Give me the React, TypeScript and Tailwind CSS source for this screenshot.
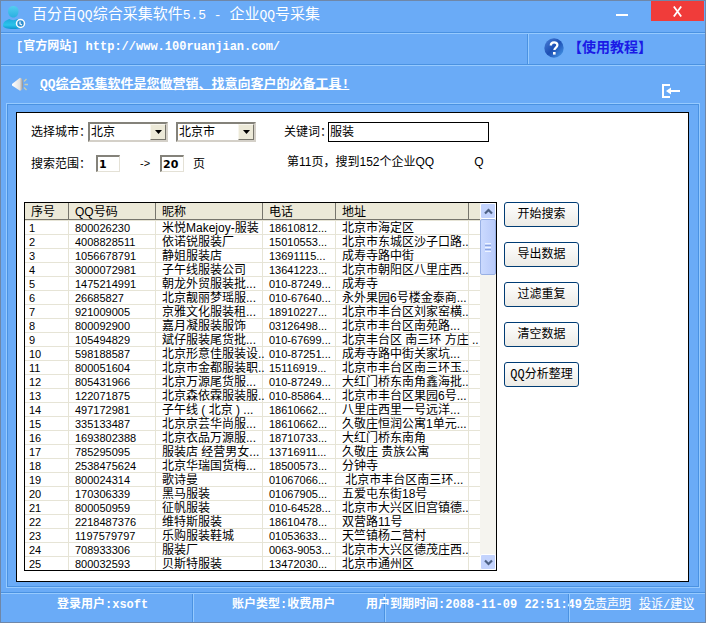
import { useState, type ReactNode } from "react";
import { clsx } from "clsx";

type Company = [qq: string, name: string, phone: string, address: string];

const companies: Company[] = [
  ["800026230", "米悦Makejoy-服装", "18610812...", "北京市海定区"],
  ["4008828511", "依诺锐服装厂", "15010553...", "北京市东城区沙子口路.."],
  ["1056678791", "静姐服装店", "13691115...", "成寿寺路中街"],
  ["3000072981", "子午线服装公司", "13641223...", "北京市朝阳区八里庄西.."],
  ["1475214991", "朝龙外贸服装批...", "010-87249...", "成寿寺"],
  ["26685827", "北京靓丽梦瑶服...", "010-67640...", "永外果园6号楼金泰商..."],
  ["921009005", "京雅文化服装租...", "18910227...", "北京市丰台区刘家窑横.."],
  ["800092900", "嘉月凝服装服饰", "03126498...", "北京市丰台区南苑路..."],
  ["105494829", "斌仔服装尾货批...", "010-67699...", "北京丰台区 南三环 方庄 .."],
  ["598188587", "北京形意佳服装设..", "010-87251...", "成寿寺路中街关家坑..."],
  ["800051604", "北京市金都服装职..", "15116919...", "北京市丰台区南三环玉.."],
  ["805431966", "北京万源尾货服...", "010-87249...", "大红门桥东南角鑫海批.."],
  ["122071875", "北京森依霖服装服..", "010-85864...", "北京市丰台区果园6号..."],
  ["497172981", "子午线 ( 北京 ) ...", "18610662...", "八里庄西里一号远洋..."],
  ["335133487", "北京京芸华尚服...", "18610662...", "久敬庄恒润公寓1单元..."],
  ["1693802388", "北京衣品万源服...", "18710733...", "大红门桥东南角"],
  ["785295095", "服装店 经营男女...", "13716911...", "久敬庄 贵族公寓"],
  ["2538475624", "北京华瑞国货梅...", "18500573...", "分钟寺"],
  ["800024314", "歌诗曼", "01067066...", " 北京市丰台区南三环..."],
  ["170306339", "黑马服装", "01067905...", "五爱屯东街18号"],
  ["800050959", "征帆服装", "010-64528...", "北京市大兴区旧宫镇德.."],
  ["2218487376", "维特斯服装", "18610478...", "双营路11号"],
  ["1197579797", "乐购服装鞋城", "01053633...", "天竺镇杨二营村"],
  ["708933306", "服装厂", "0063-9053...", "北京市大兴区德茂庄西.."],
  ["800032593", "贝斯特服装", "13472030...", "北京市通州区"],
];

const headers = ["序号", "QQ号码", "昵称", "电话", "地址", ""];
const actions = ["开始搜索", "导出数据", "过滤重复", "清空数据", "QQ分析整理"];

const mono = "font-['Liberation_Mono','Noto_Sans_CJK_SC',monospace]";

function Groove() {
  return (
    <div>
      <div className="h-px bg-[#4a92e2]" />
      <div className="h-px bg-[#96caff]" />
    </div>
  );
}

function Half({ children }: { children: ReactNode }) {
  return <span className={clsx("text-[13px] whitespace-pre", mono)}>{children}</span>;
}

function UserIcon() {
  return (
    <svg className="h-6 w-6 shrink-0" viewBox="0 0 24 24" aria-hidden="true">
      <defs>
        <linearGradient id="head" x1="0" y1="0" x2="0" y2="1">
          <stop offset="0" stopColor="#55cdf0" />
          <stop offset="1" stopColor="#2ab0e0" />
        </linearGradient>
        <linearGradient id="body" x1="0" y1="0" x2="0" y2="1">
          <stop offset="0" stopColor="#1ea8dc" />
          <stop offset="0.6" stopColor="#2cc4ea" />
          <stop offset="1" stopColor="#0c94d0" />
        </linearGradient>
      </defs>
      <path d="M0 21c0-4 2.500-5.500 6.500-7 1.500 1.500 6 1.500 7.500 0 4 1.500 7 3 7 7-1 2-4 3-10.500 3S.8 23 0 21z" fill="url(#body)" />
      <path d="M10.300 1c3.400 0 5.200 2.300 5.200 5.400 0 3.200-2 6.100-5.200 6.100S5.100 9.600 5.100 6.400C5.100 3.300 6.900 1 10.300 1z" fill="url(#head)" />
      <circle cx="17.500" cy="18.500" r="4" fill="#2f8fd0" stroke="#fff" strokeWidth="1.500" />
      <path d="M17 16.500V19l2 1" fill="none" stroke="#fff" strokeWidth="1.200" />
    </svg>
  );
}

function SpeakerIcon() {
  return (
    <svg className="h-4 w-4 shrink-0" viewBox="0 0 16 16" aria-hidden="true">
      <defs>
        <linearGradient id="horn" x1="0" y1="0" x2="1" y2="0">
          <stop offset="0" stopColor="#ffffff" />
          <stop offset="0.7" stopColor="#e2e2e2" />
          <stop offset="1" stopColor="#8f8f8f" />
        </linearGradient>
      </defs>
      <path d="M0 7 8 .800q3 0 3 6.400t-3 6.600L0 8.500z" fill="url(#horn)" />
      <path d="m12 4.500 2.500-2.500M12.500 7.500H16M12 10.500l2.500 2.500" stroke="#c9cdb0" strokeWidth="1.300" />
    </svg>
  );
}

function HelpIcon() {
  return (
    <svg className="h-5 w-5 shrink-0" viewBox="0 0 20 20" aria-hidden="true">
      <defs>
        <linearGradient id="help" x1="0" y1="0" x2="1" y2="1">
          <stop offset="0" stopColor="#4a80d8" />
          <stop offset="0.5" stopColor="#1d4fb4" />
          <stop offset="1" stopColor="#4aa0ee" />
        </linearGradient>
      </defs>
      <circle cx="10" cy="10" r="9.700" fill="url(#help)" />
      <path d="M6.800 7.500c0-4.200 6.600-4.200 6.600-.4 0 2.500-3 2.400-3 5" fill="none" stroke="#fff" strokeWidth="2.300" />
      <rect x="9" y="14" width="2.600" height="2.600" fill="#fff" />
    </svg>
  );
}

type ComboProps = { label: string; options: string[] };

function Combo({ label, options }: ComboProps) {
  return (
    <div className="relative h-5 w-20 border-2 border-t-[#84827a] border-l-[#84827a] border-r-[#d4d0c8] border-b-[#d4d0c8] bg-white">
      <select aria-label={label} className="block h-4 w-full appearance-none bg-white pl-px text-xs leading-4 outline-none">
        {options.map((option) => (
          <option key={option}>{option}</option>
        ))}
      </select>
      <span className="pointer-events-none absolute inset-y-0 right-0 flex w-4 items-center justify-center border border-t-[#f8f6ee] border-r-[#77756c] border-b-[#77756c] border-l-[#f8f6ee] bg-[#ece9d8]">
        <svg className="h-1 w-[7px]" viewBox="0 0 7 4" aria-hidden="true">
          <path d="M0 0h7L3.500 4z" />
        </svg>
      </span>
    </div>
  );
}

type PageInputProps = { label: string; value: string; onChange: (value: string) => void };

function PageInput({ label, value, onChange }: PageInputProps) {
  return (
    <input
      aria-label={label}
      value={value}
      onChange={(e) => onChange(e.target.value)}
      className="h-[17px] w-6 border-t-2 border-r border-b border-l-2 border-t-[#84827a] border-r-[#e4e1d6] border-b-[#e4e1d6] border-l-[#84827a] bg-white pl-px font-['DejaVu_Sans',sans-serif] text-[11px] font-bold outline-none"
    />
  );
}

function ScrollBar() {
  const arrow = "flex h-4 w-full items-center justify-center rounded-xs border border-white bg-[#c3d3fd]";
  return (
    <div className="flex w-4 shrink-0 flex-col bg-[#f5f4ef]">
      <button type="button" aria-label="向上滚动" className={arrow}>
        <svg className="h-[7px] w-[9px]" viewBox="0 0 9 7" aria-hidden="true">
          <path d="m1 5.500 3.500-3.500L8 5.500" fill="none" stroke="#4d6185" strokeWidth="2.200" />
        </svg>
      </button>
      <div className="flex h-14 flex-col items-center justify-center gap-px rounded-xs border border-[#98b0e4] bg-gradient-to-r from-[#cbdafe] to-[#b8cafa]">
        <i className="h-px w-[6px] bg-[#eef4fe]" />
        <i className="h-px w-[6px] bg-[#8aa4e0]" />
        <i className="h-px w-[6px] bg-[#eef4fe]" />
        <i className="h-px w-[6px] bg-[#8aa4e0]" />
        <i className="h-px w-[6px] bg-[#eef4fe]" />
      </div>
      <button type="button" aria-label="向下滚动" className={clsx(arrow, "mt-auto")}>
        <svg className="h-[7px] w-[9px]" viewBox="0 0 9 7" aria-hidden="true">
          <path d="M1 1.500 4.500 5 8 1.500" fill="none" stroke="#4d6185" strokeWidth="2.200" />
        </svg>
      </button>
    </div>
  );
}

function CompanyTable() {
  const cell = "border-t border-r border-[#e6e4d6] p-0 pt-[2px] pl-[6px] whitespace-pre";
  return (
    <div className="flex min-w-0 flex-1 border border-black bg-white">
      <table className="w-full min-w-0 table-fixed border-separate border-spacing-0">
        <colgroup>
          <col className="w-11" />
          <col className="w-[87px]" />
          <col className="w-[107px]" />
          <col className="w-[73px]" />
          <col className="w-[133px]" />
          <col />
        </colgroup>
        <thead>
          <tr className="text-left text-xs leading-[14px]">
            {headers.map((header, i) => (
              <th
                key={i}
                className="border-r border-b border-[#77756c] bg-[#ece9d8] p-0 pt-[2px] pl-[6px] font-normal whitespace-nowrap last:border-r-0"
              >
                {header}
              </th>
            ))}
          </tr>
        </thead>
        <tbody className="text-xs leading-[11px]">
          {companies.map(([qq, name, phone, address], i) => (
            <tr key={qq}>
              <td className="border-t border-r border-[#e6e4d6] p-0 pt-[2px] pl-1 text-[11px] leading-[11px]">{i + 1}</td>
              <td className={clsx(cell, "text-[11px] leading-[11px]")}>{qq}</td>
              <td className={cell}>{name}</td>
              <td className={clsx(cell, "text-[11px] leading-[11px]")}>{phone}</td>
              <td className={cell}>{address}</td>
              <td className="border-t border-[#e6e4d6] p-0" />
            </tr>
          ))}
        </tbody>
      </table>
      <ScrollBar />
    </div>
  );
}

export default function App() {
  const [keyword, setKeyword] = useState("服装");
  const [from, setFrom] = useState("1");
  const [to, setTo] = useState("20");

  return (
    <div className="flex min-h-screen flex-col border border-[#6f87a8] bg-[#6aabf7] font-['Liberation_Sans','Noto_Sans_CJK_SC',sans-serif] text-xs text-black">
      <header className="flex h-[31px] items-center pl-[2px] text-white">
        <UserIcon />
        <h1 className="ml-[5px] pb-1 text-[15px] leading-6 whitespace-nowrap">
          百分百<Half>QQ</Half>综合采集软件<Half>5.5 - </Half>企业<Half>QQ</Half>号采集
        </h1>
        <button type="button" aria-label="最小化" className="ml-auto flex h-7 w-9 items-center justify-center self-start">
          <span className="h-[2px] w-3 bg-white" />
        </button>
        <button
          type="button"
          aria-label="关闭"
          className="mr-px ml-[11px] flex h-5 w-[53px] items-center justify-center self-start bg-[#f03c3a]"
        >
          <svg className="h-[11px] w-[9px]" viewBox="0 0 9 11" aria-hidden="true">
            <path d="m.8.500 7.400 10M8.200.500.800 10.500" stroke="#fff" strokeWidth="1.800" />
          </svg>
        </button>
      </header>
      <Groove />

      <div className="flex h-[30px]">
        <a
          href="http://www.100ruanjian.com/"
          className={clsx("flex-1 pt-[3px] pl-[15px] font-bold leading-5 whitespace-nowrap text-white", mono)}
        >
          [官方网站] http://www.100ruanjian.com/
        </a>
        <div className="flex w-[178px] border-l border-[#4a92e2]">
          <a href="#help" className="flex w-full items-start border-l border-[#96caff] pt-1 pl-[15px]">
            <HelpIcon />
            <span className="ml-1 text-sm leading-[18px] font-bold whitespace-nowrap text-[#1a1ae6]">【使用教程】</span>
          </a>
        </div>
      </div>
      <Groove />

      <div className="flex h-[37px] items-center pr-[25px] pl-[11px] text-white">
        <SpeakerIcon />
        <a href="#about" className={clsx("ml-3 text-[13px] font-bold whitespace-nowrap underline", mono)}>
          QQ综合采集软件是您做营销、找意向客户的必备工具!
        </a>
        <button type="button" aria-label="退出" className="ml-auto self-end pb-[5px]">
          <svg className="h-[14px] w-[18px]" viewBox="0 0 18 14" aria-hidden="true">
            <path d="M8 1H1v12h7" fill="none" stroke="#fff" strokeWidth="2" />
            <path d="M8 7h10" stroke="#fff" strokeWidth="2" />
            <path d="m4 7 5-3.500v7z" fill="#fff" />
          </svg>
        </button>
      </div>

      <main className="mx-[5px] mb-1 flex flex-1 flex-col border border-[#96caff]">
        <div className="flex flex-1 flex-col border border-[#4a92e2] pt-[7px] pr-[9px] pb-1 pl-2">
          <div className="flex-1 border border-black bg-white pt-[9px] pb-[10px] pl-[7px]">
            <div className="flex h-5 items-center pl-[7px]">
              <span className="w-[57px] whitespace-nowrap">选择城市：</span>
              <Combo label="省份" options={["北京", "上海", "广东"]} />
              <div className="ml-2">
                <Combo label="城市" options={["北京市"]} />
              </div>
              <label htmlFor="keyword" className="ml-7 w-11 whitespace-nowrap">
                关键词：
              </label>
              <input
                id="keyword"
                value={keyword}
                onChange={(e) => setKeyword(e.target.value)}
                className="h-5 w-[161px] border border-black bg-white pb-[3px] pl-px text-xs outline-none"
              />
            </div>

            <div className="mt-[13px] flex h-[17px] items-center pl-[7px]">
              <span className="w-[65px] whitespace-nowrap">搜索范围：</span>
              <PageInput label="起始页" value={from} onChange={setFrom} />
              <span className="w-10 pl-5 text-[11px]">-&gt;</span>
              <PageInput label="结束页" value={to} onChange={setTo} />
              <span className="ml-[9px]">页</span>
              <span className="ml-[82px] pb-1 whitespace-nowrap">第11页，搜到152个企业QQ</span>
              <span className="ml-10 pb-1">Q</span>
            </div>

            <div className="mt-[30px] flex gap-[7px]">
              <CompanyTable />
              <div className="mr-[109px] flex w-[75px] shrink-0 flex-col gap-[15px]">
                {actions.map((action) => (
                  <button
                    key={action}
                    type="button"
                    className={clsx(
                      "h-[25px] rounded-[3px] border border-[#003c74] bg-gradient-to-b from-white to-[#ecebe6] pt-px whitespace-nowrap",
                      mono
                    )}
                  >
                    {action}
                  </button>
                ))}
              </div>
            </div>
          </div>
        </div>
      </main>

      <Groove />
      <footer className={clsx("flex h-7 leading-[22px] whitespace-nowrap text-white", mono)}>
        <div className="w-48 border-r border-[#4a92e2] pl-14 font-bold">登录用户:xsoft</div>
        <div className="w-48 border-r border-l border-r-[#4a92e2] border-l-[#96caff] pl-[38px] font-bold">
          账户类型:收费用户
        </div>
        <div className="w-[184px] border-r border-l border-r-[#4a92e2] border-l-[#96caff] font-bold">
          <span className="-ml-5">用户到期时间:2088-11-09 22:51:49</span>
        </div>
        <nav className="flex flex-1 gap-2 border-l border-[#96caff] pl-[13px]">
          <a href="#disclaimer" className="underline">
            免责声明
          </a>
          <a href="#feedback" className="underline">
            投诉/建议
          </a>
        </nav>
      </footer>
    </div>
  );
}
